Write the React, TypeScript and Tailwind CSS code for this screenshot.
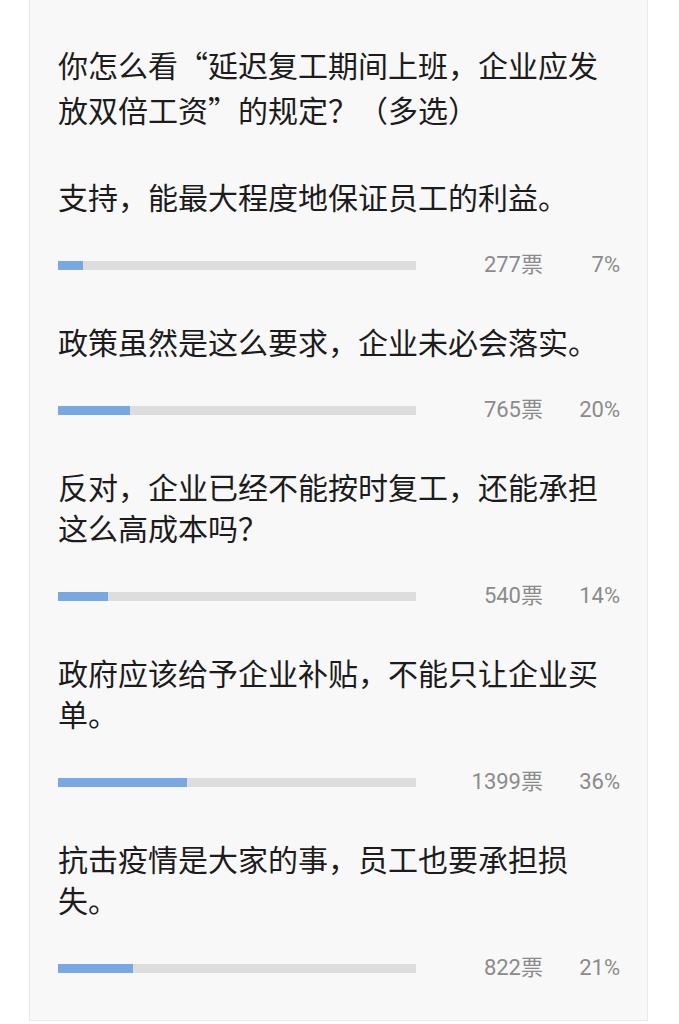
import React from "react";

const options = [
  { text: "支持，能最大程度地保证员工的利益。", votes: 277, pct: 7 },
  { text: "政策虽然是这么要求，企业未必会落实。", votes: 765, pct: 20 },
  { text: "反对，企业已经不能按时复工，还能承担这么高成本吗？", votes: 540, pct: 14 },
  { text: "政府应该给予企业补贴，不能只让企业买单。", votes: 1399, pct: 36 },
  { text: "抗击疫情是大家的事，员工也要承担损失。", votes: 822, pct: 21 },
];

export default function App() {
  return (
    <div lang="zh-CN" className="w-[679px] h-[1024px] bg-white">
      <div className="ml-[29px] w-[619px] bg-[#f8f8f8] border-x border-b border-[#e9e9e9] pt-[42px] pb-[40px] pl-[28px] pr-[27px] font-['Noto_Sans_CJK_SC',sans-serif] text-[#1c1c1c]">
        <div className="text-[30px] leading-[45px]">
          你怎么看“延迟复工期间上班，企业应发放双倍工资”的规定？（多选）
        </div>
        {options.map((o, i) => (
          <div key={i} className="pt-[44px]">
            <div className="text-[30px] leading-[41px]">{o.text}</div>
            <div className="mt-[36px] flex h-[24px] items-center">
              <div className="h-[9px] w-[358px] bg-[#dddddd]">
                <div
                  className="h-full bg-[#78a8e1]"
                  style={{ width: `${o.pct}%` }}
                />
              </div>
              <div className="w-[127px] text-right text-[22px] leading-[24px] text-[#8b8b8b] font-['Roboto','Noto_Sans_CJK_SC',sans-serif]">
                {o.votes}票
              </div>
              <div className="w-[77px] text-right text-[22px] leading-[24px] text-[#8b8b8b] font-['Roboto','Noto_Sans_CJK_SC',sans-serif]">
                {o.pct}%
              </div>
            </div>
          </div>
        ))}
      </div>
    </div>
  );
}
